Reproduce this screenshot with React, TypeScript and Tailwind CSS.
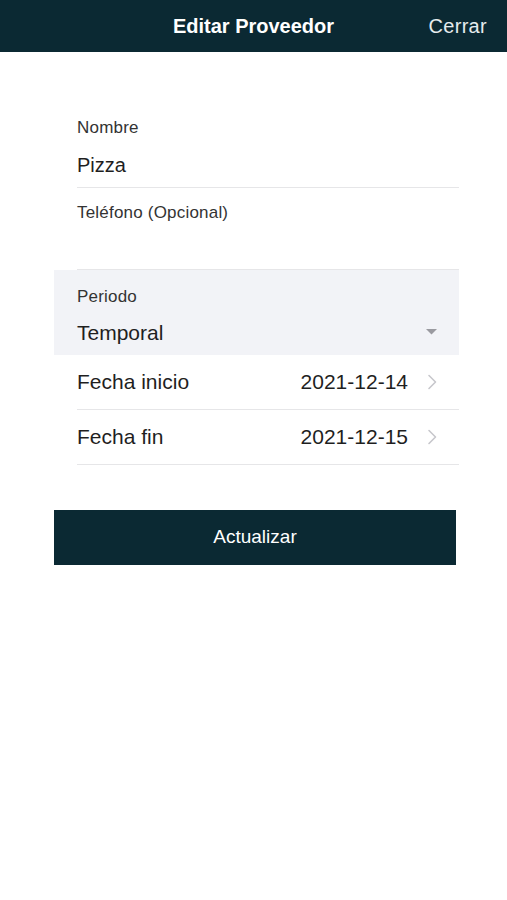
const ROWS = [
  { label: 'Fecha inicio', value: '2021-12-14' },
  { label: 'Fecha fin', value: '2021-12-15' },
];

const Chevron = () => (
  <svg width="10" height="16" viewBox="0 0 10 16" fill="none">
    <path d="M2 1.5 L8.5 8 L2 14.5" stroke="#c7c7cc" strokeWidth="1.6" strokeLinecap="round" strokeLinejoin="round" />
  </svg>
);

const App = () => {
  return (
    <div className="min-h-[900px] w-[507px] bg-white font-['Liberation_Sans',Arial,sans-serif] text-[#1f1f1f]">
      {/* Header */}
      <header className="relative flex h-[52px] items-center justify-center bg-[#0b2933]">
        <h1 className="text-[20px] font-bold text-white">Editar Proveedor</h1>
        <button className="absolute right-[20px] top-1/2 -translate-y-1/2 text-[20px] tracking-[0.3px] text-[#e6ecee]">
          Cerrar
        </button>
      </header>

      {/* Form */}
      <div className="ml-[54px] mt-[66px] w-[405px]">
        <div className="ml-[23px] border-b border-[#e6e6e8] pb-[10px]">
          <p className="h-[20px] text-[17px] leading-[20px] tracking-[0.2px] text-[#333]">Nombre</p>
          <p className="mt-[15px] h-[24px] text-[20px] leading-[24px]">Pizza</p>
        </div>

        <div className="ml-[23px] h-[82px] border-b border-[#e6e6e8] pt-[15px]">
          <p className="h-[20px] text-[17px] leading-[20px] tracking-[0.2px] text-[#333]">Teléfono (Opcional)</p>
        </div>

        <div className="flex h-[85px] items-end justify-between bg-[#f2f3f7] pb-[10px] pl-[23px] pr-[22px]">
          <div>
            <p className="h-[20px] text-[17px] leading-[20px] tracking-[0.2px] text-[#333]">Periodo</p>
            <p className="mt-[14px] h-[24px] text-[21px] leading-[24px]">Temporal</p>
          </div>
          <svg width="11" height="6" viewBox="0 0 11 6" className="mb-[10px]">
            <polygon points="0,0 11,0 5.5,5.5" fill="#9a9aa0" />
          </svg>
        </div>

        {ROWS.map((r) => (
          <div
            key={r.label}
            className="ml-[23px] flex h-[55px] items-center justify-between border-b border-[#e6e6e8] pr-[22px]"
          >
            <span className="text-[21px]">{r.label}</span>
            <div className="flex items-center gap-[19px]">
              <span className="text-[21px]">{r.value}</span>
              <Chevron />
            </div>
          </div>
        ))}

        <button className="mt-[45px] flex h-[55px] w-[402px] items-center justify-center bg-[#0b2933] text-[19px] text-white">
          Actualizar
        </button>
      </div>
    </div>
  );
};

export default App;
